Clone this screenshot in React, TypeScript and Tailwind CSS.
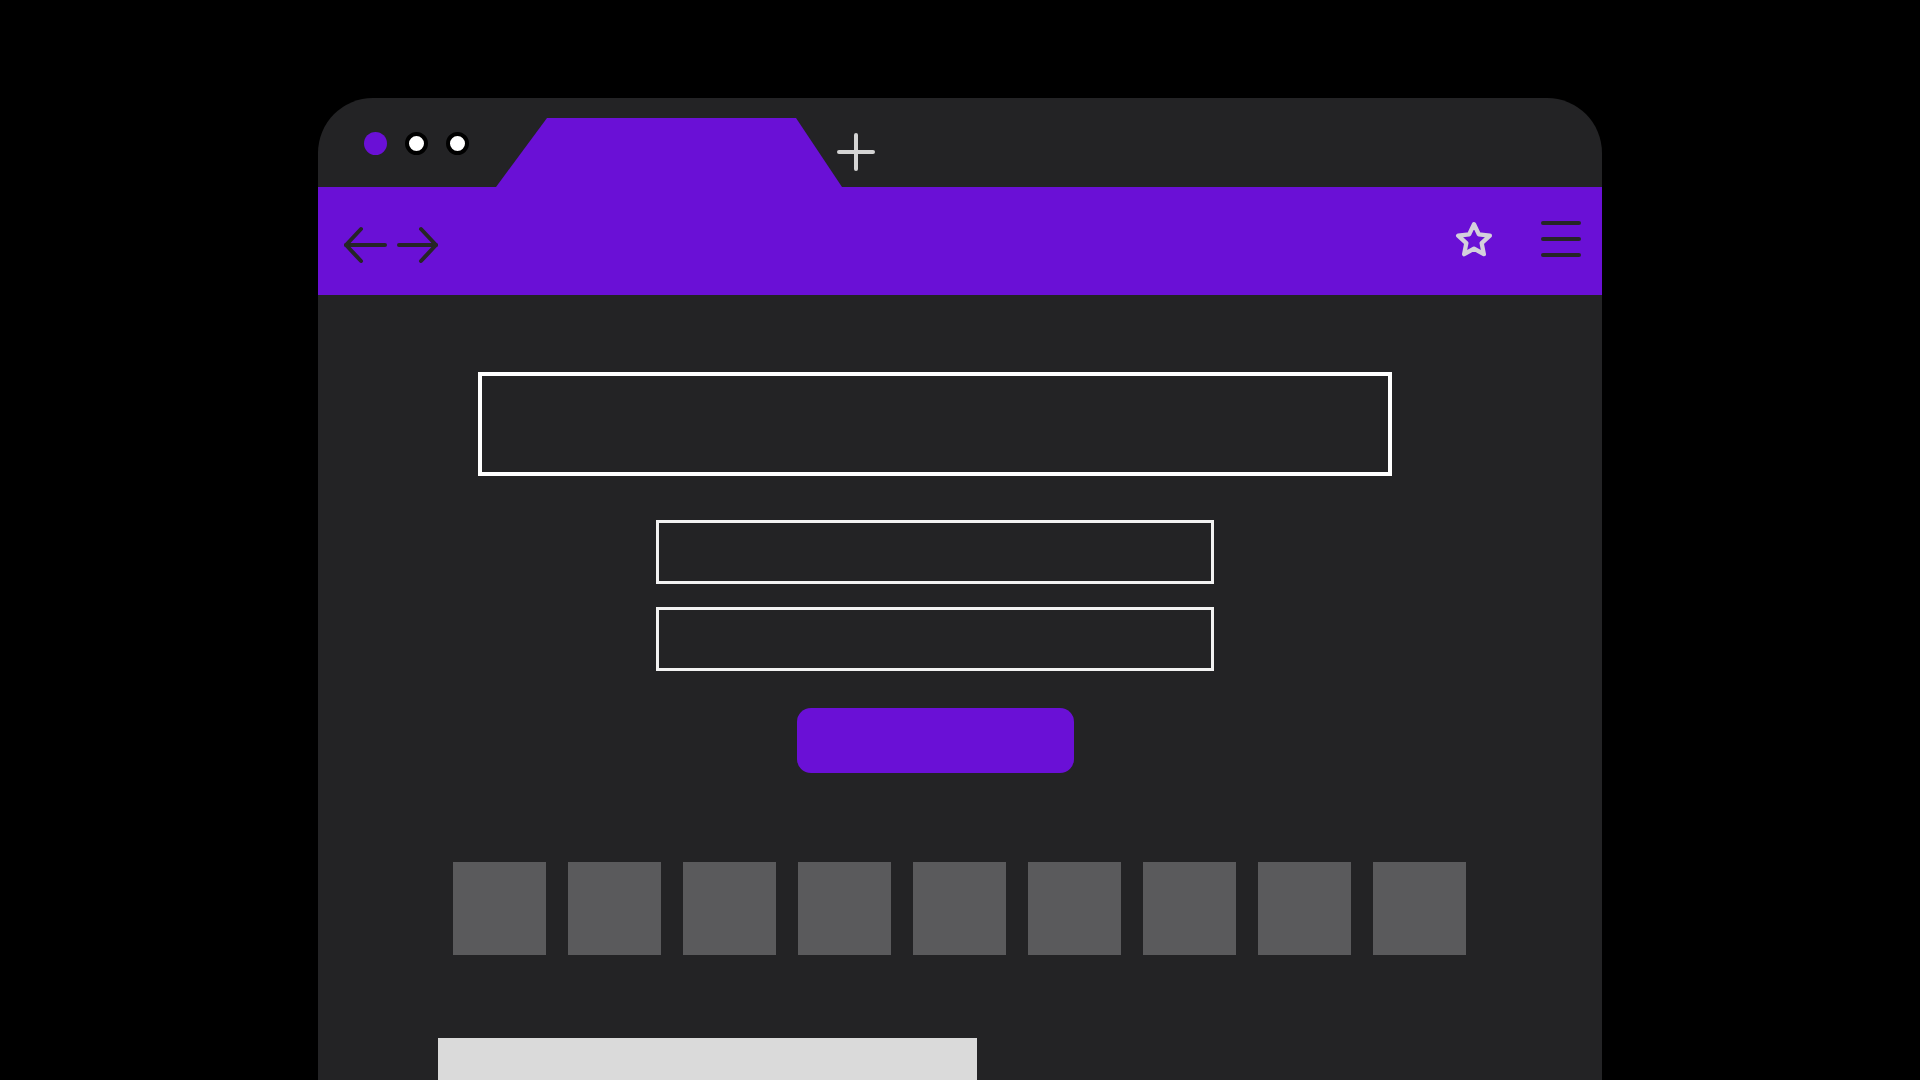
import React from "react";

// browser window mockup: tab strip, purple toolbar, wireframe form
function Dots() {
  return (
    <div className="flex items-center gap-[18px] pl-[46px] w-[178px] pt-[2px]">
      <span className="block w-[23px] h-[23px] rounded-full bg-[#6a10d6]" />
      <span className="block w-[23px] h-[23px] rounded-full bg-white border-[4px] border-black" />
      <span className="block w-[23px] h-[23px] rounded-full bg-white border-[4px] border-black" />
    </div>
  );
}

function Toolbar() {
  return (
    <div className="flex shrink-0 items-center h-[108px] bg-[#6a10d6] pl-[25px] pr-[20px]">
      <svg width="96" height="40" viewBox="0 0 96 40" className="mt-[8px]" fill="none" stroke="#262626" strokeWidth="4" strokeLinecap="round" strokeLinejoin="round">
        <path d="M42 20H3" />
        <path d="M18 4L3 20l15 16" />
        <path d="M56 20h37" />
        <path d="M78 4l15 16-15 16" />
      </svg>
      <div className="flex-1" />
      <svg width="40" height="40" viewBox="0 0 24 24" fill="none" stroke="#d4d0dc" strokeWidth="2.6" strokeLinejoin="round" className="mr-[46px] -mt-[2px]">
        <polygon points="12,2.5 14.9,8.6 21.5,9.4 16.6,13.9 17.9,20.5 12,17.2 6.1,20.5 7.4,13.9 2.5,9.4 9.1,8.6" />
      </svg>
      <svg width="42" height="40" viewBox="0 0 42 40" fill="none" stroke="#262626" strokeWidth="4" strokeLinecap="round" className="-mt-[5px]">
        <path d="M3 4h36" />
        <path d="M3 20h36" />
        <path d="M3 36h36" />
      </svg>
    </div>
  );
}

export default function App() {
  const squares = [0, 1, 2, 3, 4, 5, 6, 7, 8];
  return (
    <div className="w-full h-[1080px] bg-black pt-[98px] overflow-hidden">
      <div className="ml-[318px] w-[1284px] h-[982px] rounded-t-[55px] bg-[#232325] flex flex-col overflow-hidden">
        {/* tab strip */}
        <div className="flex shrink-0 h-[89px]">
          <Dots />
          <svg width="346" height="69" viewBox="0 0 346 69" className="self-end block">
            <polygon points="0,69 51,0 300,0 346,69" fill="#6a10d6" />
          </svg>
          <svg width="40" height="40" viewBox="0 0 40 40" className="mt-[34px] -ml-[6px]" stroke="#d4d4d4" strokeWidth="4" strokeLinecap="round">
            <path d="M20 3v34" />
            <path d="M3 20h34" />
          </svg>
        </div>

        <Toolbar />

        {/* page */}
        <div className="flex flex-col shrink-0">
          <div className="ml-[160px] w-[914px] mt-[77px] flex flex-col items-center">
            <div className="w-[914px] h-[104px] border-[4px] border-white" />
            <div className="w-[558px] h-[64px] mt-[44px] border-[3px] border-[#f2f2f2]" />
            <div className="w-[558px] h-[64px] mt-[23px] border-[3px] border-[#f2f2f2]" />
            <button className="w-[277px] h-[65px] mt-[37px] rounded-[14px] bg-[#6a10d6]" />
          </div>

          <div className="flex gap-[22px] ml-[135px] mt-[89px]">
            {squares.map((i) => (
              <div key={i} className="w-[93px] h-[93px] bg-[#5a5a5c]" />
            ))}
          </div>

          <div className="ml-[120px] mt-[83px] w-[539px] h-[80px] bg-[#dadada]" />
        </div>
      </div>
    </div>
  );
}
